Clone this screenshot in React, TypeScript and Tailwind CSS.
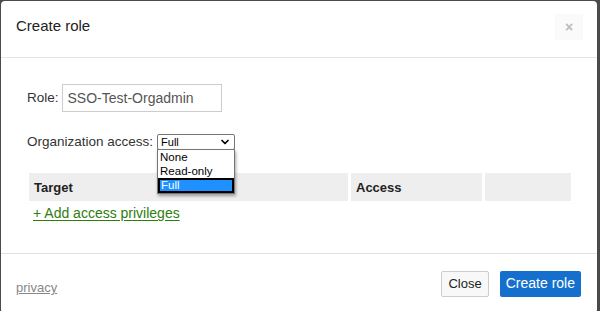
import { ChevronDown } from "lucide-react";

export default function App() {
  return (
    <div className="w-[600px] h-[311px] bg-[#4a4a4a] overflow-hidden font-['Liberation_Sans',Arial,sans-serif]">
      <div className="ml-[1px] mt-[1px] w-[596px] h-[312px] bg-white rounded-[4px] flex flex-col">
        {/* header */}
        <div className="h-[57px] border-b border-[#e5e5e5] flex items-center justify-between pl-[15px] pr-[14px]">
          <h4 className="text-[15px] text-[#222] -mt-[6px]">Create role</h4>
          <button className="w-[28px] h-[26px] bg-[#fafafa] flex items-center justify-center text-[#bbb] text-[14px] font-bold -mt-[4px]">
            ×
          </button>
        </div>

        {/* body */}
        <div className="h-[196px] border-b border-[#e0e0e0] pt-[26px] pl-[26px] pr-[25px]">
          <div className="flex items-center gap-[3px]">
            <label className="text-[13.5px] text-[#333]">Role:</label>
            <div className="w-[160px] h-[28px] border border-[#ccc] flex items-center px-[5px] text-[14px] text-[#555]">
              SSO-Test-Orgadmin
            </div>
          </div>

          <div className="flex items-center gap-[4px] mt-[20px] relative">
            <label className="text-[13.5px] text-[#333]">Organization access:</label>
            <div className="relative">
              <div className="w-[78px] h-[16px] border border-[#767676] rounded-[2px] flex items-center justify-between pl-[3px] pr-[3px] text-[11px] text-black">
                <span>Full</span>
                <ChevronDown size={12} strokeWidth={3.5} />
              </div>
              <div className="absolute left-0 top-[15px] w-[78px] bg-white border border-[#767676] shadow-[1px_2px_3px_rgba(0,0,0,0.35)] text-[11.5px] text-black z-10">
                <div className="h-[14px] leading-[14px] pl-[2px]">None</div>
                <div className="h-[14px] leading-[14px] pl-[2px]">Read-only</div>
                <div className="h-[15px] leading-[11px] pl-[1px] bg-[#1e90ff] border-2 border-black text-white">Full</div>
              </div>
            </div>
          </div>

          <div className="mt-[21px] ml-[2px] flex gap-[3px] h-[28px] text-[13px] font-bold text-[#222]">
            <div className="w-[319px] bg-[#eeeeee] flex items-center pl-[5px]">Target</div>
            <div className="w-[131px] bg-[#eeeeee] flex items-center pl-[5px]">Access</div>
            <div className="w-[86px] bg-[#eeeeee]"></div>
          </div>

          <a className="inline-block mt-[1px] ml-[6px] text-[14px] text-[#2e7d0e] underline underline-offset-2">
            + Add access privileges
          </a>
        </div>

        {/* footer */}
        <div className="flex items-center justify-between pl-[15px] pr-[16px] pt-[16px]">
          <a className="text-[13px] text-[#888] underline mt-[8px]">privacy</a>
          <div className="flex gap-[11px]">
            <button className="h-[26px] px-[6px] border border-[#ccc] bg-[#f8f8f8] text-[13px] text-[#222] rounded-[2px]">
              Close
            </button>
            <button className="h-[26px] px-[6px] bg-[#1570cd] text-[14px] text-white rounded-[2px]">
              Create role
            </button>
          </div>
        </div>
      </div>
    </div>
  );
}
